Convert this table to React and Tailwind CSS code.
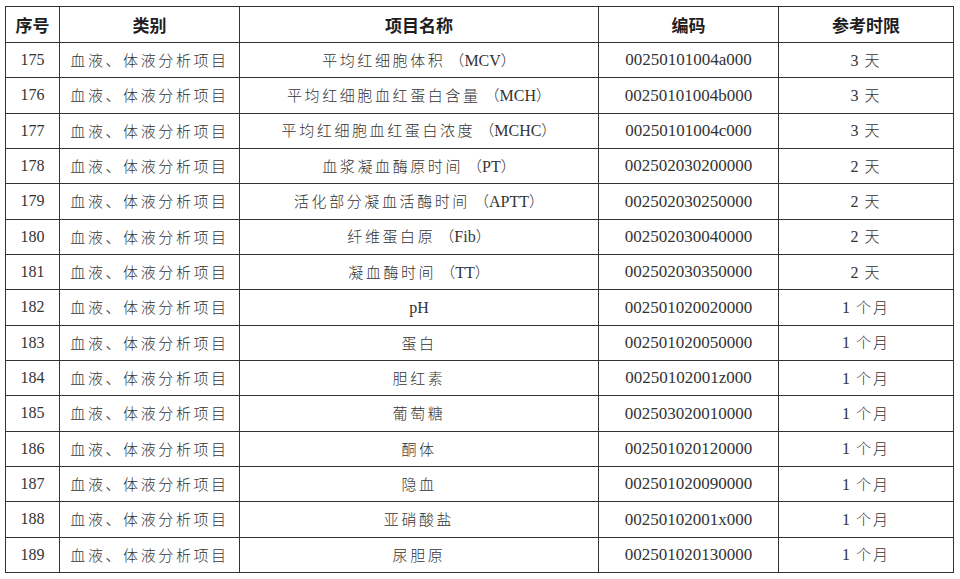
import React from "react";

const rows = [
  ["175", "平均红细胞体积", "MCV", "00250101004a000", "3", "天"],
  ["176", "平均红细胞血红蛋白含量", "MCH", "00250101004b000", "3", "天"],
  ["177", "平均红细胞血红蛋白浓度", "MCHC", "00250101004c000", "3", "天"],
  ["178", "血浆凝血酶原时间", "PT", "002502030200000", "2", "天"],
  ["179", "活化部分凝血活酶时间", "APTT", "002502030250000", "2", "天"],
  ["180", "纤维蛋白原", "Fib", "002502030040000", "2", "天"],
  ["181", "凝血酶时间", "TT", "002502030350000", "2", "天"],
  ["182", "pH", null, "002501020020000", "1", "个月"],
  ["183", "蛋白", null, "002501020050000", "1", "个月"],
  ["184", "胆红素", null, "00250102001z000", "1", "个月"],
  ["185", "葡萄糖", null, "002503020010000", "1", "个月"],
  ["186", "酮体", null, "002501020120000", "1", "个月"],
  ["187", "隐血", null, "002501020090000", "1", "个月"],
  ["188", "亚硝酸盐", null, "00250102001x000", "1", "个月"],
  ["189", "尿胆原", null, "002501020130000", "1", "个月"],
];

const serif = "font-['Liberation_Serif',serif]";
const cjk = "font-['Noto_Sans_CJK_SC',sans-serif] font-light";

const NameCell = ({ name, abbr }) => {
  if (name === "pH") {
    return <span className={`${serif} text-[16px]`}>pH</span>;
  }
  return (
    <span>
      <span className={`${cjk} text-[15px] tracking-[2.6px]`}>{name}</span>
      {abbr && (
        <>
          <span className={`${cjk} text-[15px] ml-[4px]`}>（</span>
          <span className={`${serif} text-[16px]`}>{abbr}</span>
          <span className={`${cjk} text-[15px]`}>）</span>
        </>
      )}
    </span>
  );
};

const App = () => {
  const th =
    "border-[1.5px] border-[#333] font-['Noto_Sans_CJK_SC',sans-serif] font-bold text-[17px] text-[#1e1e1e] text-center align-middle p-0";
  const td =
    "border-[1.5px] border-[#333] text-center align-middle p-0 text-[#333]";

  return (
    <div className="w-[960px] h-[579px] bg-white pl-[5px] pt-[6px]">
      <table className="w-[948px] table-fixed border-collapse border-[1.5px] border-[#333]">
        <colgroup>
          <col className="w-[54px]" />
          <col className="w-[180px]" />
          <col className="w-[359px]" />
          <col className="w-[180px]" />
          <col className="w-[175px]" />
        </colgroup>
        <thead>
          <tr className="h-[36px]">
            <th className={th}>序号</th>
            <th className={th}>类别</th>
            <th className={th}>项目名称</th>
            <th className={th}>编码</th>
            <th className={th}>参考时限</th>
          </tr>
        </thead>
        <tbody>
          {rows.map(([no, name, abbr, code, n, unit]) => (
            <tr key={no} className="h-[35.33px]">
              <td className={`${td} ${serif} text-[16px]`}>{no}</td>
              <td className={`${td} ${cjk} text-[15px] tracking-[2.6px]`}>
                血液、体液分析项目
              </td>
              <td className={td}>
                <NameCell name={name} abbr={abbr} />
              </td>
              <td className={`${td} ${serif} text-[17px]`}>{code}</td>
              <td className={td}>
                <span className={`${serif} text-[16px]`}>{n}</span>
                <span className={`${cjk} text-[15px] ml-[6px] tracking-[2px]`}>
                  {unit}
                </span>
              </td>
            </tr>
          ))}
        </tbody>
      </table>
    </div>
  );
};

export default App;
